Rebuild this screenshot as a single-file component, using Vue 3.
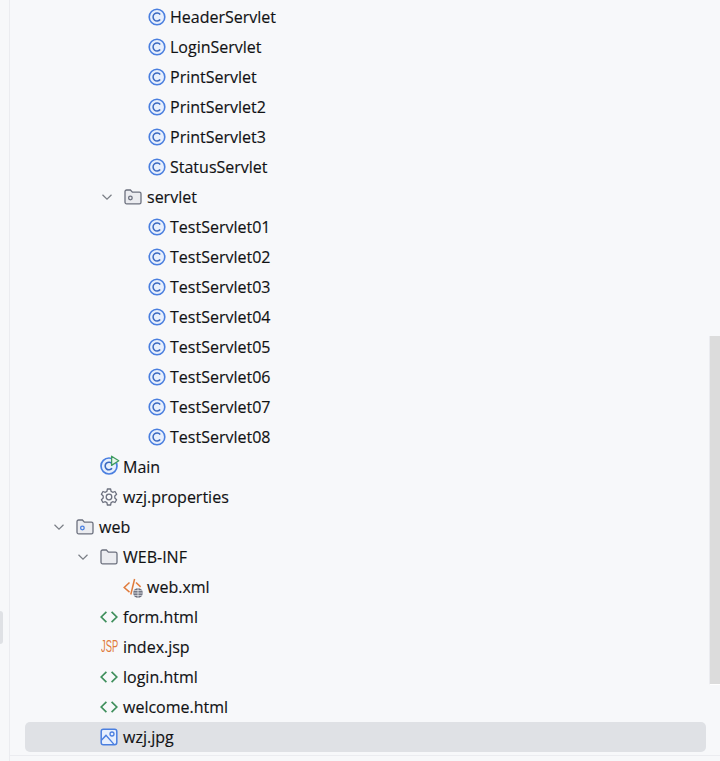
<template>
  <div class="panel">
    <span class="edge-tab"></span>
    <div class="gutter"></div>
    <div class="tree">
      <div
        v-for="row in rows"
        :key="row.name"
        class="row"
        :class="{ selected: row.selected }"
        :style="{ paddingLeft: 26 + row.depth * 24 + 'px' }"
      >
        <span class="arrow">
          <svg v-if="row.open" width="16" height="16" viewBox="0 0 16 16">
            <path d="M3.5 5.8 8 10.2l4.5-4.4" fill="none" stroke="#7a7e85" stroke-width="1.2" />
          </svg>
        </span>
        <span class="icon" :class="{ tight: row.icon === 'class' }">
          <svg v-if="row.icon === 'class'" width="18" height="18" viewBox="0 0 18 18">
            <circle cx="9" cy="9" r="7.8" fill="#e7effd" stroke="#4a7fe0" stroke-width="1.6" />
            <path d="M12.2 6.5A4 4 0 1 0 12.2 11.5" fill="none" stroke="#3a68c0" stroke-width="1.5" />
          </svg>
          <svg v-else-if="row.icon === 'main'" class="main-icon" width="20" height="20" viewBox="0 0 20 20">
            <circle cx="9" cy="11" r="8" fill="#e7effd" stroke="#4a7fe0" stroke-width="1.7" />
            <path d="M12 8.7A3.8 3.8 0 1 0 12 13.3" fill="none" stroke="#3a68c0" stroke-width="1.6" />
            <path d="M11.6 1.2v9.2l7.2-4.6z" fill="#e9f6ec" stroke="#3f9c5f" stroke-width="1.3" stroke-linejoin="round" />
          </svg>
          <svg v-else-if="row.icon === 'gear'" width="18" height="18" viewBox="0 0 18 18">
            <path
              d="M7.4 1h3.2l.5 2.4 1.6.9 2.3-.8 1.6 2.8-1.8 1.6v2.2l1.8 1.6-1.6 2.8-2.3-.8-1.6.9-.5 2.4H7.4l-.5-2.4-1.6-.9-2.3.8-1.6-2.8 1.8-1.6V7.9L1.4 6.3 3 3.5l2.3.8 1.6-.9z"
              fill="none"
              stroke="#6c707e"
              stroke-width="1.3"
              stroke-linejoin="round"
            />
            <circle cx="9" cy="9" r="2.8" fill="none" stroke="#6c707e" stroke-width="1.3" />
          </svg>
          <svg v-else-if="row.icon === 'folder'" width="18" height="18" viewBox="0 0 18 18">
            <path
              d="M1 3.6c0-.9.7-1.6 1.6-1.6h3.8l2 2.2h7c.9 0 1.6.7 1.6 1.6v8.4c0 .9-.7 1.6-1.6 1.6H2.6c-.9 0-1.6-.7-1.6-1.6z"
              fill="#ebecf0"
              stroke="#6c707e"
              stroke-width="1.3"
            />
            <circle v-if="row.dot" cx="6.4" cy="10" r="1.8" fill="none" :stroke="row.dot" stroke-width="1.3" />
          </svg>
          <svg v-else-if="row.icon === 'xml'" class="xml-icon" width="22" height="22" viewBox="0 0 22 22">
            <path d="M6.5 5.5 1.2 10.5l5.3 4.6" fill="none" stroke="#e07b3c" stroke-width="1.5" />
            <path d="M11.6 2 7.8 17.5" fill="none" stroke="#e07b3c" stroke-width="1.5" />
            <path d="M13 5.5l4.6 4.4" fill="none" stroke="#e07b3c" stroke-width="1.5" />
            <circle cx="15" cy="16" r="4.8" fill="#6c707e" />
            <path d="M10.2 16h9.6M15 11.2v9.6M11.2 13.6h7.6M11.2 18.4h7.6" fill="none" stroke="#f7f8fa" stroke-width=".7" />
          </svg>
          <svg v-else-if="row.icon === 'html'" width="18" height="18" viewBox="0 0 18 18">
            <path d="M6.4 3.8 1.2 9l5.2 5.2M11.6 3.8 16.8 9l-5.2 5.2" fill="none" stroke="#3f8f5c" stroke-width="1.7" />
          </svg>
          <span v-else-if="row.icon === 'jsp'" class="jsp">JSP</span>
          <svg v-else-if="row.icon === 'image'" width="18" height="18" viewBox="0 0 18 18">
            <rect x="1.2" y="1.2" width="15.6" height="15.6" rx="2.2" fill="#e7effd" stroke="#4a7fe0" stroke-width="1.5" />
            <path d="M1.6 12l4.4-4.6 8 9" fill="none" stroke="#4a7fe0" stroke-width="1.4" />
            <circle cx="12" cy="6" r="2" fill="none" stroke="#4a7fe0" stroke-width="1.3" />
          </svg>
        </span>
        <span class="name">{{ row.name }}</span>
      </div>
    </div>
    <div class="scrollbar"></div>
    <div class="bottom-line"></div>
  </div>
</template>

<script setup>
const servlet = (name) => ({ name, depth: 3, icon: 'class' })

const rows = [
  servlet('HeaderServlet'),
  servlet('LoginServlet'),
  servlet('PrintServlet'),
  servlet('PrintServlet2'),
  servlet('PrintServlet3'),
  servlet('StatusServlet'),
  { name: 'servlet', depth: 2, icon: 'folder', open: true, dot: '#6c707e' },
  servlet('TestServlet01'),
  servlet('TestServlet02'),
  servlet('TestServlet03'),
  servlet('TestServlet04'),
  servlet('TestServlet05'),
  servlet('TestServlet06'),
  servlet('TestServlet07'),
  servlet('TestServlet08'),
  { name: 'Main', depth: 1, icon: 'main' },
  { name: 'wzj.properties', depth: 1, icon: 'gear' },
  { name: 'web', depth: 0, icon: 'folder', open: true, dot: '#4a7fe0' },
  { name: 'WEB-INF', depth: 1, icon: 'folder', open: true },
  { name: 'web.xml', depth: 2, icon: 'xml' },
  { name: 'form.html', depth: 1, icon: 'html' },
  { name: 'index.jsp', depth: 1, icon: 'jsp' },
  { name: 'login.html', depth: 1, icon: 'html' },
  { name: 'welcome.html', depth: 1, icon: 'html' },
  { name: 'wzj.jpg', depth: 1, icon: 'image', selected: true }
]
</script>

<style>
html,
body {
  margin: 0;
  overflow: hidden;
}
</style>

<style scoped>
.panel {
  position: relative;
  display: flex;
  width: 720px;
  height: 761px;
  overflow: hidden;
  background: #f7f8fa;
  font-family: "Open Sans", "Noto Sans", sans-serif;
  color: #111214;
}

.gutter {
  flex: none;
  width: 9px;
  border-right: 1px solid #ebecf0;
}

.edge-tab {
  position: absolute;
  left: 0;
  top: 611px;
  width: 3px;
  height: 33px;
  background: #dfe1e5;
  border-radius: 0 3px 3px 0;
}

.tree {
  flex: none;
  width: 681px;
  margin-left: 15px;
  padding-top: 2px;
}

.row {
  display: flex;
  align-items: center;
  height: 30px;
  box-sizing: border-box;
  border-radius: 5px;
}

.row.selected {
  background: #dfe1e5;
}

.arrow {
  flex: none;
  display: flex;
  width: 16px;
  height: 16px;
  margin-right: 9px;
}

.icon {
  flex: none;
  position: relative;
  display: flex;
  align-items: center;
  width: 18px;
  height: 18px;
  margin-right: 5px;
}

.icon.tight {
  margin-right: 4px;
}

.icon svg {
  flex: none;
}

.main-icon {
  margin-top: -4px;
}

.xml-icon {
  position: absolute;
  left: -1px;
  top: -1px;
}

.jsp {
  flex: none;
  font-family: "Liberation Sans", sans-serif;
  font-size: 17px;
  line-height: 18px;
  color: #e07b3c;
  transform: scaleX(0.55);
  transform-origin: left center;
  margin-left: 1px;
}

.name {
  font-size: 16px;
  line-height: 30px;
  white-space: nowrap;
  -webkit-text-stroke: 0.15px currentColor;
}

.scrollbar {
  position: absolute;
  right: 0;
  top: 336px;
  width: 11px;
  height: 349px;
  background: #dcdcdc;
  border-left: 1px solid #ebecf0;
  border-bottom: 1px solid #ffffff;
  box-sizing: border-box;
}

.bottom-line {
  position: absolute;
  left: 9px;
  right: 0;
  top: 755px;
  height: 1px;
  background: #ebecf0;
}
</style>
